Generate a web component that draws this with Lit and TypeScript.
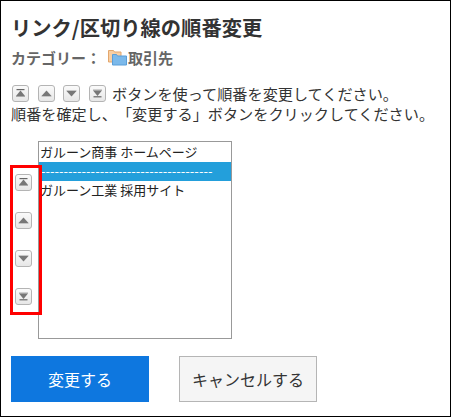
import { LitElement, html, css, svg } from "lit";
import { customElement } from "lit/decorators.js";

const glyphs: Record<string, unknown> = {
  top: svg`<path d="M4.5 4h8v1.2h-8z" fill="#666"/><path d="M8.5 5.5l4.5 5.5H4z" fill="#777"/><path d="M4 11h9v1H4z" fill="#aaa"/>`,
  up: svg`<path d="M8.5 5.5l5 5.5h-10z" fill="#777"/><path d="M3.5 11h10v.8h-10z" fill="#bbb"/>`,
  down: svg`<path d="M3.5 6h10l-5 5.5z" fill="#777"/><path d="M3.5 5.2h10V6h-10z" fill="#bbb"/>`,
  bottom: svg`<path d="M4 4.5h9v1H4z" fill="#aaa"/><path d="M4 5.5h9l-4.5 5.5z" fill="#777"/><path d="M4.5 11.2h8v1.2h-8z" fill="#666"/>`,
};

function arrow(kind: string) {
  return html`<svg class="arrow" width="17" height="17" viewBox="0 0 17 17">
    <defs>
      <linearGradient id="g-${kind}" x1="0" y1="0" x2="0" y2="1">
        <stop offset="0" stop-color="#fbfbfb"/><stop offset="1" stop-color="#e6e6e6"/>
      </linearGradient>
    </defs>
    <rect x=".5" y=".5" width="16" height="16" rx="2.5" fill="url(#g-${kind})" stroke="#b4b4b4"/>
    ${glyphs[kind]}
  </svg>`;
}

@customElement("app-root")
export class AppRoot extends LitElement {
  static styles = css`
    :host {
      display: block;
      box-sizing: border-box;
      width: 451px;
      height: 417px;
      border: 1px solid #000;
      background: #fff;
      font-family: "Noto Sans CJK JP", "Liberation Sans", sans-serif;
      color: #333;
      position: relative;
      overflow: hidden;
      text-spacing-trim: space-all;
    }
    .page { padding: 13px 0 0 10px; display: flex; flex-direction: column; }
    h1 {
      margin: 0;
      font-size: 20.3px;
      line-height: 26px;
      font-weight: 700;
      color: #333;
    }
    .cat {
      margin-top: 7px;
      height: 20px;
      display: flex;
      align-items: center;
      font-size: 15px;
      font-weight: 700;
      color: #666;
    }
    .cat .label { width: 97px; }
    .cat svg { margin-right: 1px; }
    .help {
      margin-top: 16px;
      font-size: 15.15px;
      line-height: 20px;
      color: #333;
      white-space: nowrap;
    }
    .help .line { display: flex; align-items: center; height: 20px; }
    .help .icons { display: flex; width: 101px; }
    .help .icons .arrow { margin-left: 1px; margin-right: 7.5px; }
    .editor { margin-top: 18px; display: flex; align-items: stretch; position: relative; }
    .moves {
      width: 27px;
      display: flex;
      flex-direction: column;
      gap: 21px;
      padding: 33px 0 0 4px;
      box-sizing: border-box;
    }
    .arrow { display: block; flex: none; }
    .list {
      width: 194px;
      height: 198px;
      box-sizing: border-box;
      border: 1px solid #999;
      font-size: 13px;
      color: #222;
      padding-top: 1px;
    }
    .opt { height: 19px; line-height: 17px; padding-left: 1px; white-space: nowrap; overflow: hidden; }
    .opt.sel { background: #239fdb; color: #fff; line-height: 18px; padding-left: 2px; }
    .mark {
      position: absolute;
      left: -1px;
      top: 24px;
      width: 32px;
      height: 150px;
      box-sizing: border-box;
      border: 3px solid #f00;
    }
    .actions { margin-top: 17px; display: flex; gap: 30px; }
    button {
      width: 138px;
      height: 46px;
      box-sizing: border-box;
      font: inherit;
      font-size: 16px;
      margin: 0;
      padding: 0;
    }
    .primary { background: #0e77df; color: #fff; border: 0; }
    .secondary { background: #f5f5f5; color: #333; border: 1px solid #b5b5b5; }
  `;

  render() {
    return html`<div class="page">
      <h1>リンク/区切り線の順番変更</h1>
      <div class="cat">
        <span class="label">カテゴリー：</span>
        <svg width="19" height="17" viewBox="0 0 19 17">
          <path d="M.5 1.5h5l1 1.5h6.5v10H.5z" fill="#f8cfa4" stroke="#e3a66c"/>
          <path d="M4.5 5.5h4l1 1.5h9v9h-14z" fill="#7cb9ea" stroke="#5a9ed8"/>
        </svg>
        <span>取引先</span>
      </div>
      <div class="help">
        <div class="line">
          <span class="icons">${arrow("top")}${arrow("up")}${arrow("down")}${arrow("bottom")}</span>
          <span>ボタンを使って順番を変更してください。</span>
        </div>
        <div class="line">順番を確定し、「変更する」ボタンをクリックしてください。</div>
      </div>
      <div class="editor">
        <div class="moves">${arrow("top")}${arrow("up")}${arrow("down")}${arrow("bottom")}</div>
        <div class="list">
          <div class="opt">ガルーン商事 ホームページ</div>
          <div class="opt sel">--------------------------------------</div>
          <div class="opt">ガルーン工業 採用サイト</div>
        </div>
        <div class="mark"></div>
      </div>
      <div class="actions">
        <button class="primary">変更する</button>
        <button class="secondary">キャンセルする</button>
      </div>
    </div>`;
  }
}
